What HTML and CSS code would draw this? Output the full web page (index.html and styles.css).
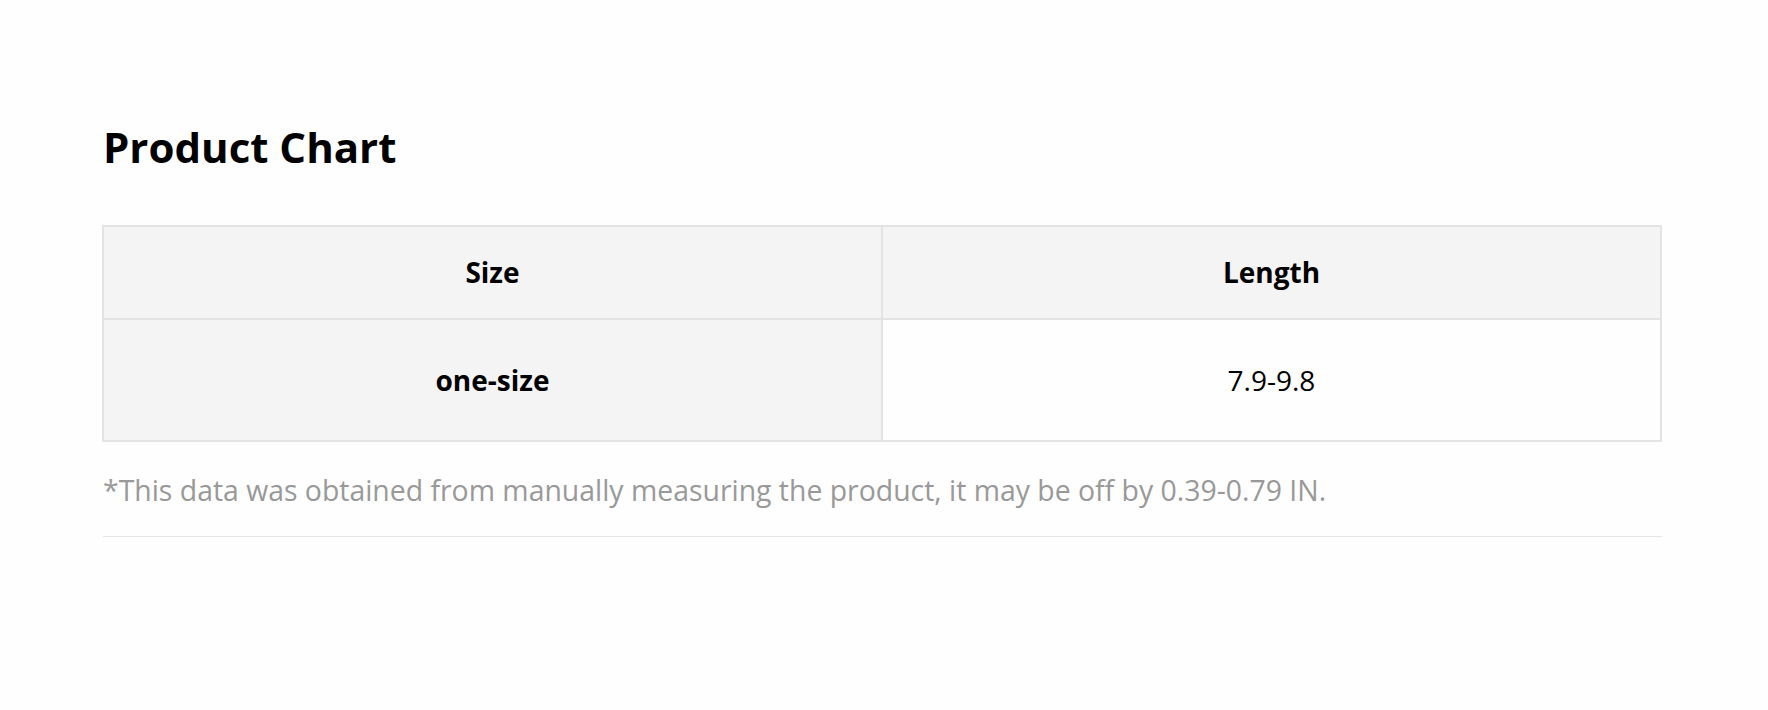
FILE: index.html
```html
<!DOCTYPE html>
<html lang="en">
<head>
    <meta charset="UTF-8">
    <meta name="viewport" content="width=device-width, initial-scale=1.0">
    <title>Product Chart</title>
    <link rel="stylesheet" href="styles.css">
</head>
<body>
    <div class="chart">
        <h1 class="chart-title">Product Chart</h1>
        <table class="size-table">
            <thead>
                <tr>
                    <th>Size</th>
                    <th>Length</th>
                </tr>
            </thead>
            <tbody>
                <tr>
                    <td class="size-name">one-size</td>
                    <td>7.9-9.8</td>
                </tr>
            </tbody>
        </table>
        <p class="chart-note">*This data was obtained from manually measuring the product, it may be off by 0.39-0.79 IN.</p>
    </div>
</body>
</html>
```

FILE: styles.css
```css
body {
    margin: 0;
    background-color: #fefefe;
    color: #000;
    font-family: "Open Sans", "Noto Sans", sans-serif;
}
.chart {
    padding: 0 106px 0 102px;
    padding-top: 123px;
}
.chart-title {
    margin: 0 0 0 1px;
    font-size: 42px;
    line-height: 48px;
    font-weight: 700;
}
.size-table {
    width: 100%;
    margin-top: 54px;
    border-collapse: collapse;
    table-layout: fixed;
    border: 2px solid #e3e3e3;
}
.size-table th,
.size-table td {
    border: 2px solid #e3e3e3;
    text-align: center;
    font-size: 28px;
}
.size-table th {
    background-color: #f4f4f4;
    font-weight: 700;
    line-height: 37px;
    padding: 27px 10px;
}
.size-table td {
    line-height: 38px;
    padding: 41px 10px;
    background-color: #fefefe;
}
.size-table td.size-name {
    background-color: #f4f4f4;
    font-weight: 700;
}
.chart-note {
    margin: 29px 0 0 1px;
    padding-bottom: 27px;
    border-bottom: 1px solid #e6e6e6;
    color: #999;
    font-size: 28.4px;
    line-height: 38px;
}
```
